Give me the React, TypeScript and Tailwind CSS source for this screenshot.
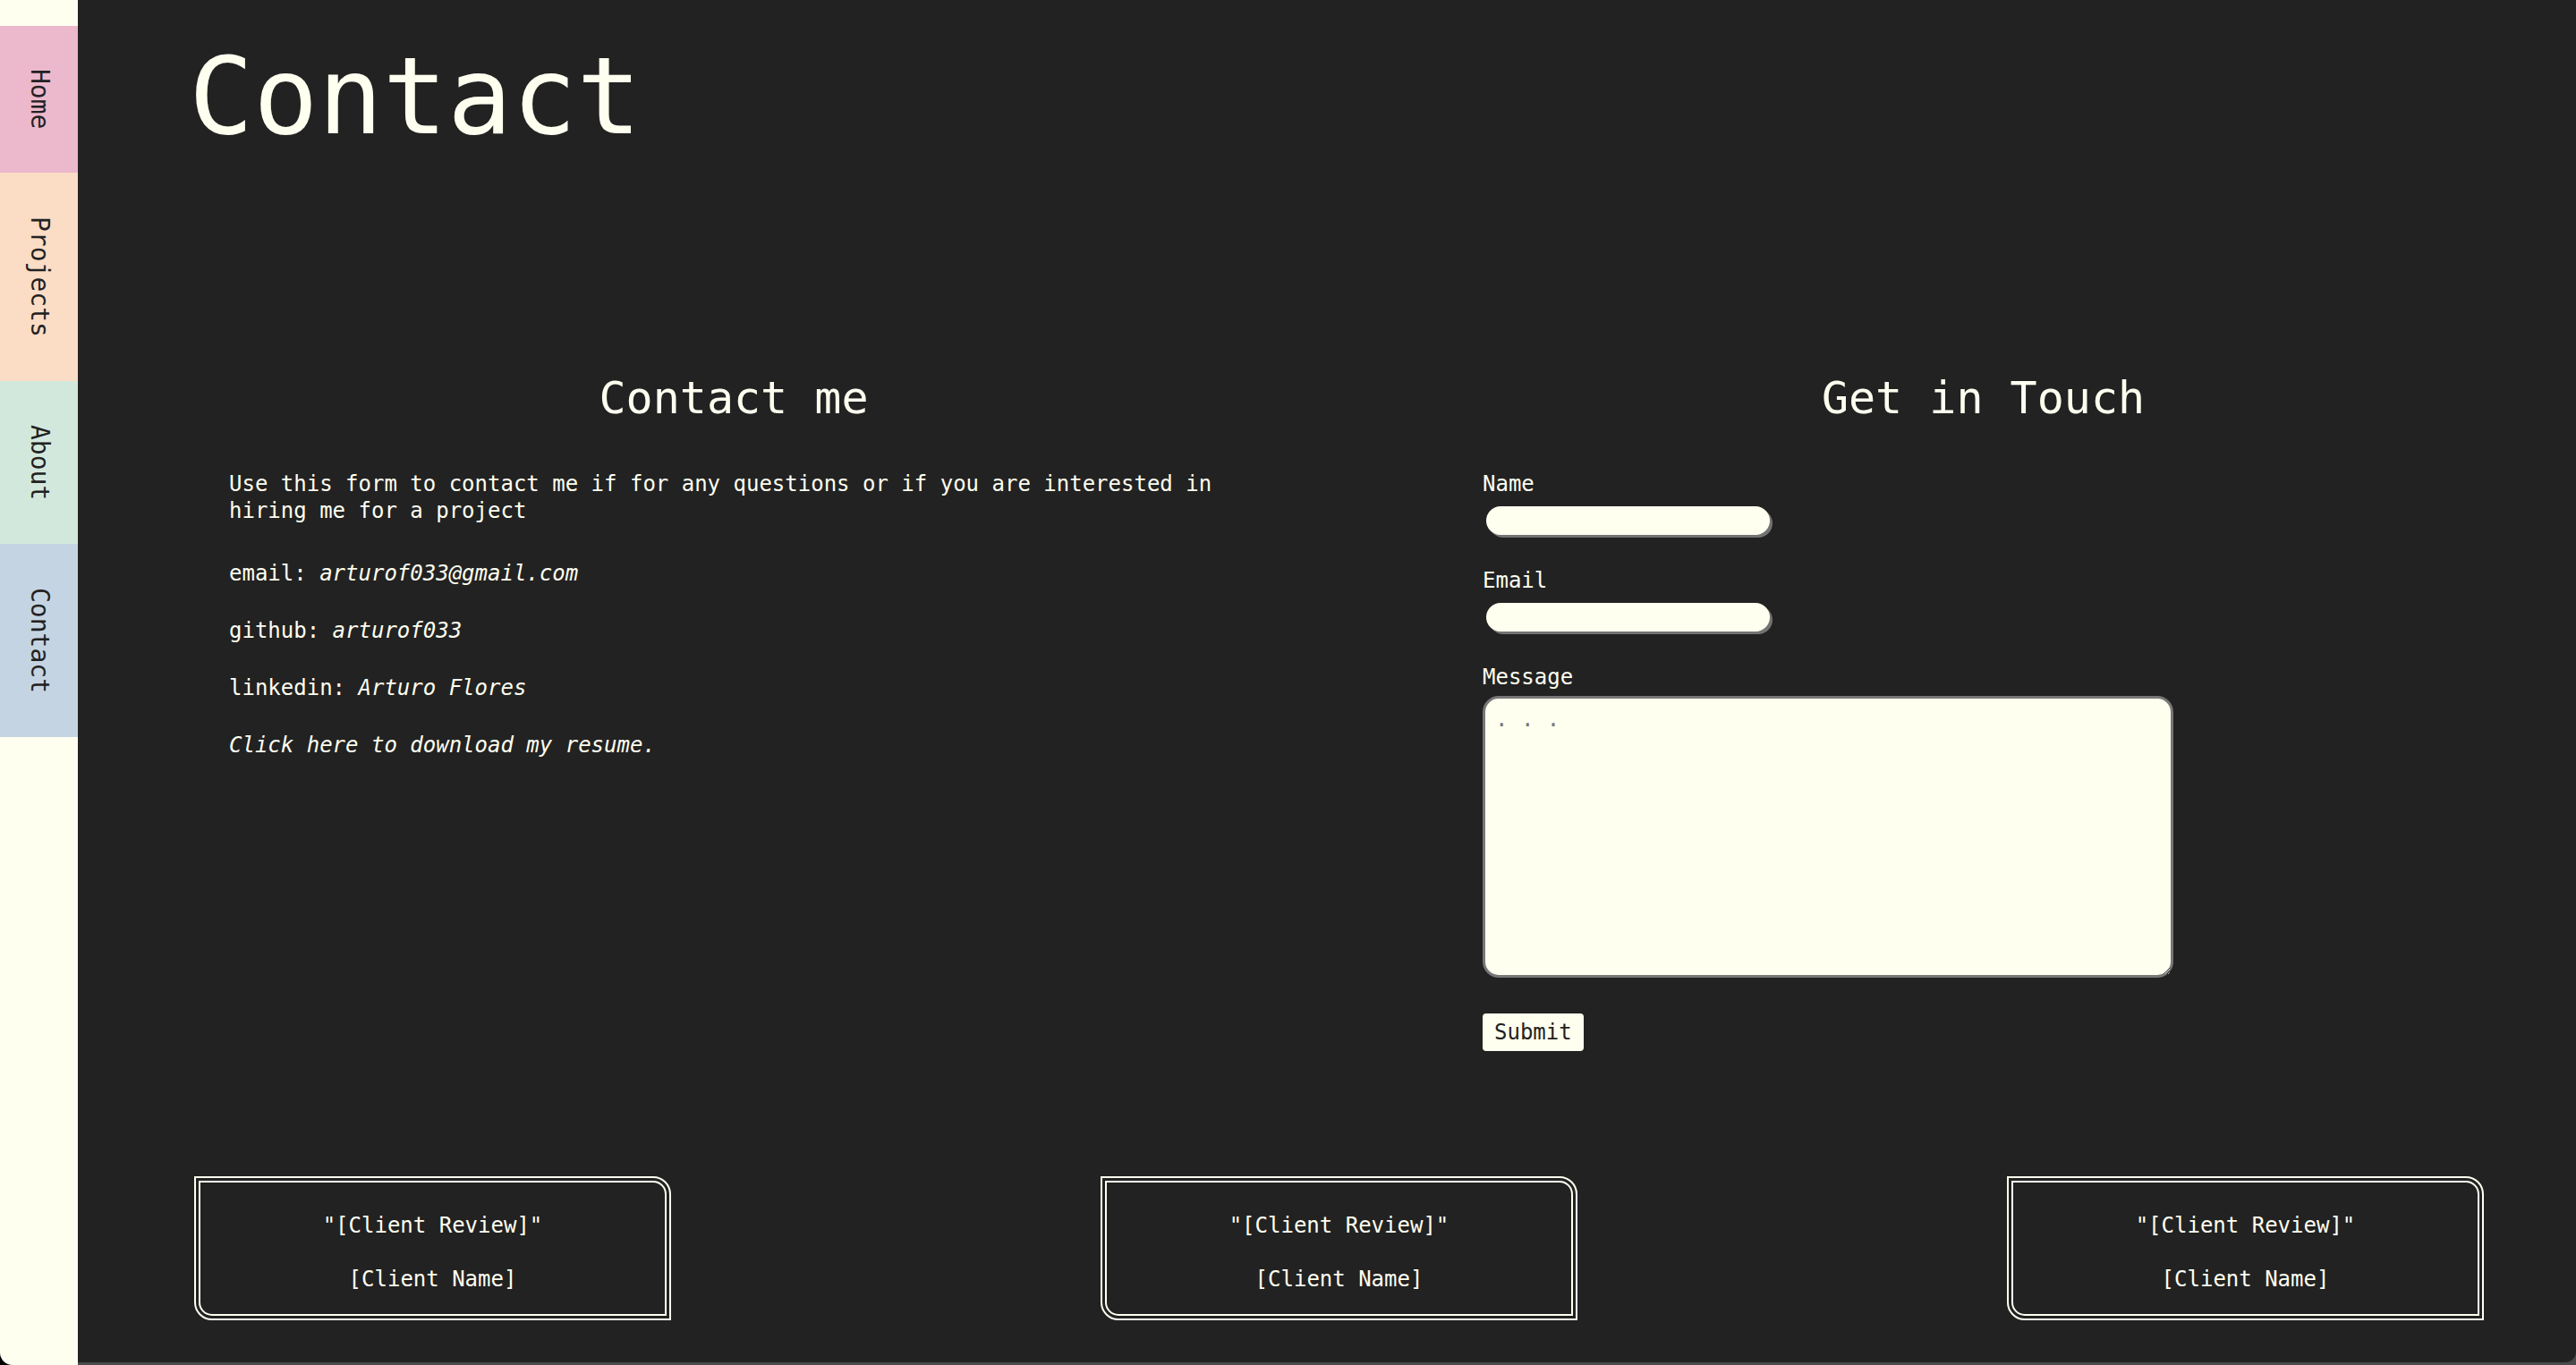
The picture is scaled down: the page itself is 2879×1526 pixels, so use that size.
import React from "react";

const tabs = [
    { label: "Home", color: "bg-[#ecb8cc]", h: "h-[164px]" },
    { label: "Projects", color: "bg-[#fbdcc5]", h: "h-[233px]" },
    { label: "About", color: "bg-[#d3e8dd]", h: "h-[182px]" },
    { label: "Contact", color: "bg-[#c5d4e2]", h: "h-[216px]" },
];

function ReviewCard() {
    return (
        <div className="w-[533px] h-[161px] border-[7px] border-double border-[#fffff0] rounded-tr-[20px] rounded-bl-[20px] flex flex-col items-center pt-[33px] gap-[30px] text-[24px] leading-[30px]">
            <p>"[Client Review]"</p>
            <p>[Client Name]</p>
        </div>
    );
}

export default function App() {
    return (
        <div className="flex h-[1526px] w-full bg-black overflow-hidden font-['DejaVu_Sans_Mono',monospace]">
            {/* Side tabs */}
            <nav className="w-[87px] shrink-0 bg-[#fffff0] rounded-bl-[14px] pt-[29px] flex flex-col">
                {tabs.map((t) => (
                    <a
                        key={t.label}
                        href="#"
                        className={`${t.color} ${t.h} flex items-center justify-center text-[#222] text-[28px] [writing-mode:vertical-rl]`}
                    >
                        {t.label}
                    </a>
                ))}
            </nav>

            {/* Main panel */}
            <div className="flex-1 flex flex-col bg-[#4a4a4a] pb-[3px]">
                <main className="flex-1 bg-[#222222] rounded-br-[12px] text-[#fffff0] pt-[48px] pl-[130px] pr-[103px]">
                    <h1 className="text-[120px] leading-none -ml-[6px]">Contact</h1>

                    <div className="flex gap-[234px] mt-[252px]">
                        {/* Left column */}
                        <section className="w-[1206px] shrink-0">
                            <h2 className="text-[50px] leading-none text-center">Contact me</h2>
                            <div className="pl-[39px] pr-[24px] mt-[56px] text-[24px] leading-[30px]">
                                <p>Use this form to contact me if for any questions or if you are interested in hiring me for a project</p>
                                <p className="mt-[40px]">email: <em>arturof033@gmail.com</em></p>
                                <p className="mt-[34px]">github: <em>arturof033</em></p>
                                <p className="mt-[34px]">linkedin: <em>Arturo Flores</em></p>
                                <p className="mt-[34px]"><em>Click here to download my resume.</em></p>
                            </div>
                        </section>

                        {/* Right column */}
                        <section className="flex-1">
                            <h2 className="text-[50px] leading-none text-center">Get in Touch</h2>
                            <form className="mt-[56px] flex flex-col items-start text-[24px] leading-[30px]">
                                <label>Name</label>
                                <input type="text" className="mt-[10px] ml-[4px] w-[317px] h-[32px] rounded-full bg-[#fffff0] shadow-[3px_3px_0_#737373] outline-none" />
                                <label className="mt-[36px]">Email</label>
                                <input type="email" className="mt-[10px] ml-[4px] w-[317px] h-[32px] rounded-full bg-[#fffff0] shadow-[3px_3px_0_#737373] outline-none" />
                                <label className="mt-[36px]">Message</label>
                                <textarea
                                    placeholder=". . ."
                                    className="mt-[6px] w-[772px] h-[315px] rounded-[18px] border-[3px] border-[#777] bg-[#fffff0] px-[11px] py-[8px] text-[#222] placeholder:text-[#777] outline-none"
                                />
                                <button type="button" className="mt-[40px] h-[42px] px-[13px] rounded-[4px] bg-[#fffff0] text-[#222]">
                                    Submit
                                </button>
                            </form>
                        </section>
                    </div>

                    {/* Reviews */}
                    <div className="flex justify-between mt-[140px]">
                        <ReviewCard />
                        <ReviewCard />
                        <ReviewCard />
                    </div>
                </main>
            </div>
        </div>
    );
}
